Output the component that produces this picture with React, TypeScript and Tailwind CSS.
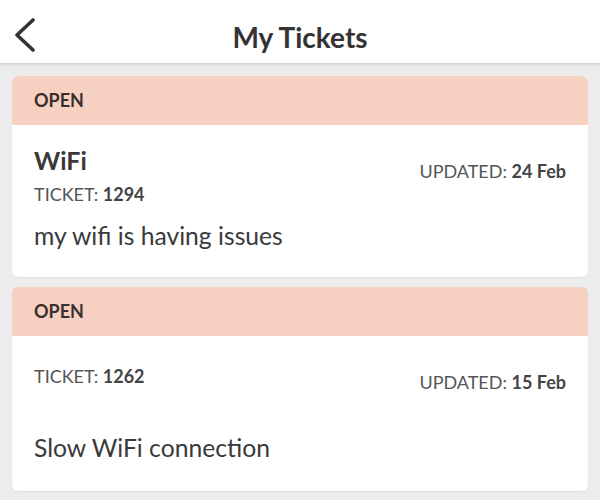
const tickets = [
  { status: "OPEN", title: "WiFi", id: "1294", updated: "24 Feb", body: "my wifi is having issues" },
  { status: "OPEN", title: "", id: "1262", updated: "15 Feb", body: "Slow WiFi connection" },
];

const App = () => {
  return (
    <div className="h-[500px] w-[600px] overflow-hidden bg-[#ececec] font-['Lato',sans-serif] text-[#3d3838]">
      <div className="relative flex h-[63px] items-center justify-center bg-white shadow-[0_1px_3px_rgba(0,0,0,0.18)]">
        <svg className="absolute left-[12px] top-[18px]" width="26" height="34" viewBox="0 0 26 34" fill="none">
          <path d="M21 2 L5 17 L21 32" stroke="#333" strokeWidth="3.6" strokeLinecap="round" strokeLinejoin="round" />
        </svg>
        <h1 className="mt-[10px] text-[28px] font-bold text-[#333]">My Tickets</h1>
      </div>

      <div className="flex flex-col gap-[10px] px-[12px] pt-[13px]">
        {tickets.map((t) => (
          <div key={t.id} className="overflow-hidden rounded-[6px] bg-white shadow-[0_1px_2px_rgba(0,0,0,0.06)]">
            <div className="flex h-[49px] items-center bg-[#f6d1c1] px-[22px] text-[18px] font-bold text-[#3a2f2f]">
              {t.status}
            </div>
            {t.title ? (
              <div className="flex h-[152px] items-start justify-between px-[22px] pt-[19px]">
                <div className="flex flex-col">
                  <span className="text-[25px] font-bold leading-[32px]">{t.title}</span>
                  <span className="mt-[6px] text-[18px] leading-[24px] text-[#555]">
                    TICKET: <span className="font-bold text-[#444]">{t.id}</span>
                  </span>
                  <span className="mt-[15px] text-[24.7px] leading-[30px] text-[#3a3a3a]">{t.body}</span>
                </div>
                <span className="mt-[15px] text-[18px] leading-[24px] text-[#555]">
                  UPDATED: <span className="font-bold text-[#444]">{t.updated}</span>
                </span>
              </div>
            ) : (
              <div className="flex h-[155px] flex-col px-[22px] pt-[28px]">
                <div className="flex items-start justify-between">
                  <span className="text-[18px] leading-[24px] text-[#555]">
                    TICKET: <span className="font-bold text-[#444]">{t.id}</span>
                  </span>
                  <span className="mt-[6px] text-[18px] leading-[24px] text-[#555]">
                    UPDATED: <span className="font-bold text-[#444]">{t.updated}</span>
                  </span>
                </div>
                <span className="mt-[39px] text-[24.7px] leading-[30px] text-[#3a3a3a]">{t.body}</span>
              </div>
            )}
          </div>
        ))}
      </div>
    </div>
  );
};

export default App;
